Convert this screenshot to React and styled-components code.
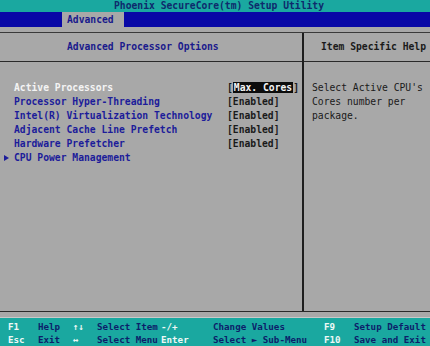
import React from 'react';
import styled, { createGlobalStyle } from 'styled-components';

const GlobalStyle = createGlobalStyle`
  body {
    margin: 0;
    background: #a8a8a8;
  }
`;

const Screen = styled.div`
  width: 430px;
  height: 346px;
  overflow: hidden;
  display: flex;
  flex-direction: column;
  background: #a8a8a8;
  font-family: 'DejaVu Sans Mono', 'Liberation Mono', monospace;
  font-weight: bold;
  font-size: 9.7px;
  line-height: 14px;
  white-space: nowrap;
`;

const TitleBar = styled.div`
  height: 12px;
  line-height: 12px;
  padding-left: 114px;
  background: #1aa8a0;
  color: #0e2a6c;
`;

const MenuBar = styled.div`
  height: 15px;
  display: flex;
  padding-left: 62px;
  background: #0808a6;
`;

const Tab = styled.div`
  width: 57px;
  padding-left: 5px;
  line-height: 15px;
  background: #a8a8a8;
  color: #1a1a8c;
`;

const Panel = styled.div`
  flex: 1;
  margin-top: 5px;
  display: grid;
  grid-template-columns: 304px 1fr;
  border-top: 1px solid #3a3a3a;
  border-bottom: 1px solid #2a2a2a;
`;

const Column = styled.div`
  display: flex;
  flex-direction: column;
  border-right: ${({ divider }) => (divider ? '2px solid #1e1e1e' : 'none')};
`;

const ColumnHeader = styled.div`
  height: 28px;
  line-height: 28px;
  padding-left: ${({ indent }) => indent}px;
  border-bottom: 1px solid #2a2a2a;
  color: ${({ tone }) => tone};
`;

const ItemList = styled.div`
  padding-top: 19px;
  display: flex;
  flex-direction: column;
`;

const Item = styled.div`
  display: grid;
  grid-template-columns: 14px 213px auto;
  height: 14px;
`;

const Marker = styled.span`
  align-self: center;
  justify-self: center;
  width: 0;
  height: 0;
  border-top: 3px solid transparent;
  border-bottom: 3px solid transparent;
  border-left: 5px solid #1c1c9a;
  margin-left: -2px;
`;

const ItemName = styled.span`
  color: ${({ active }) => (active ? '#f4f4f4' : '#1c1c9a')};
`;

const Value = styled.span`
  color: #1a1a1a;
`;

const Highlight = styled.span`
  background: #0c0c0c;
  color: #f4f4f4;
  padding: 0 1px;
`;

const HelpText = styled.div`
  padding: 19px 0 0 8px;
  color: #1a1a1a;
  font-weight: normal;
`;

const Footer = styled.div`
  height: 29px;
  margin-top: 5px;
  padding: 2px 0 0 8px;
  box-sizing: border-box;
  background: #1aa8a0;
  border-top: 1px solid #c8c8c8;
  display: grid;
  grid-template-columns: 30px 35px 24px 64px 52px 111px 30px 1fr;
  grid-auto-rows: 13px;
  font-size: 9.2px;
  line-height: 13px;
`;

const Key = styled.span`
  color: #eef8f6;
`;

const Desc = styled.span`
  color: #0c1e6a;
`;

const items = [
  { name: 'Active Processors', value: 'Max. Cores', active: true },
  { name: 'Processor Hyper-Threading', value: 'Enabled' },
  { name: 'Intel(R) Virtualization Technology', value: 'Enabled' },
  { name: 'Adjacent Cache Line Prefetch', value: 'Enabled' },
  { name: 'Hardware Prefetcher', value: 'Enabled' },
  { name: 'CPU Power Management', submenu: true },
];

const footerRows = [
  ['F1', 'Help', '↑↓', 'Select Item', '-/+', 'Change Values', 'F9', 'Setup Default'],
  ['Esc', 'Exit', '↔', 'Select Menu', 'Enter', 'Select ► Sub-Menu', 'F10', 'Save and Exit'],
];

const App = () => (
  <Screen>
    <GlobalStyle />
    <TitleBar>Phoenix SecureCore(tm) Setup Utility</TitleBar>
    <MenuBar>
      <Tab>Advanced</Tab>
    </MenuBar>
    <Panel>
      <Column divider>
        <ColumnHeader indent={67} tone="#1a1a8c">
          Advanced Processor Options
        </ColumnHeader>
        <ItemList>
          {items.map((item) => (
            <Item key={item.name}>
              {item.submenu ? <Marker /> : <span />}
              <ItemName active={item.active}>{item.name}</ItemName>
              {item.value && (
                <Value>
                  [
                  {item.active ? <Highlight>{item.value}</Highlight> : item.value}
                  ]
                </Value>
              )}
            </Item>
          ))}
        </ItemList>
      </Column>
      <Column>
        <ColumnHeader indent={17} tone="#1a1a1a">
          Item Specific Help
        </ColumnHeader>
        <HelpText>
          Select Active CPU's
          <br />
          Cores number per
          <br />
          package.
        </HelpText>
      </Column>
    </Panel>
    <Footer>
      {footerRows.map((row) =>
        row.map((text, i) =>
          i % 2 === 0 ? <Key key={text}>{text}</Key> : <Desc key={text}>{text}</Desc>
        )
      )}
    </Footer>
  </Screen>
);

export default App;
